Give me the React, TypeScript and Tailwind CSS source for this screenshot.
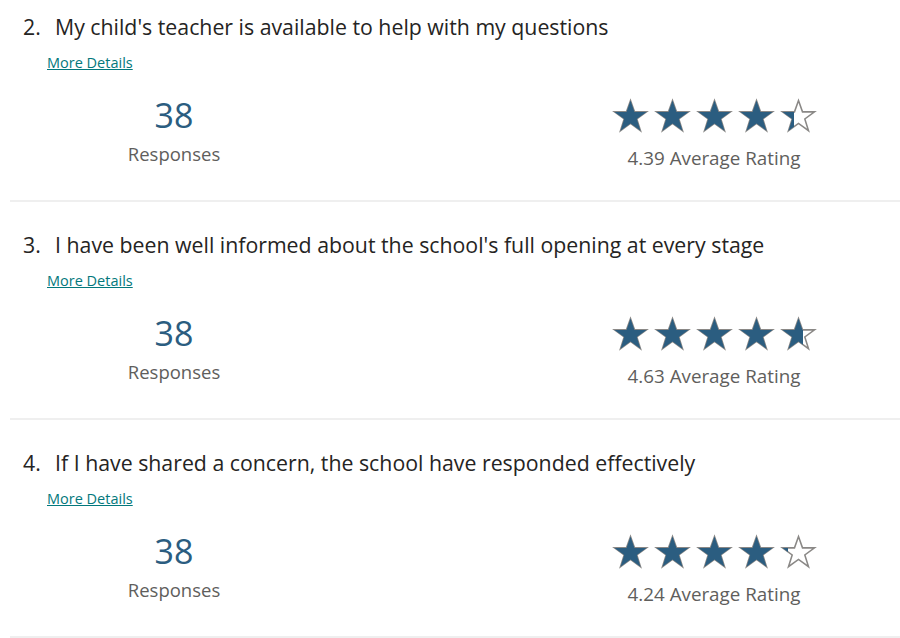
import React from "react";

type Question = {
  num: number;
  title: string;
  responses: number;
  rating: number;
};

const questions: Question[] = [
  { num: 2, title: "My child's teacher is available to help with my questions", responses: 38, rating: 4.39 },
  { num: 3, title: "I have been well informed about the school's full opening at every stage", responses: 38, rating: 4.63 },
  { num: 4, title: "If I have shared a concern, the school have responded effectively", responses: 38, rating: 4.24 },
];

const STAR = "M12 1.6l2.6 7.4h7.8l-6.3 4.6 2.4 7.6L12 16.5l-6.5 4.7 2.4-7.6L1.6 9h7.8z";

function Star({ fill }: { fill: number }) {
  return (
    <div className="relative h-[37px] w-[37px]">
      <svg viewBox="0 0 24 24" className="absolute inset-0 h-full w-full">
        <path d={STAR} fill="none" stroke="#8a8886" strokeWidth="1" strokeLinejoin="miter" />
      </svg>
      <div className="absolute inset-y-0 left-0 overflow-hidden" style={{ width: `${fill * 100}%` }}>
        <svg viewBox="0 0 24 24" className="h-[37px] w-[37px]">
          <path d={STAR} fill="#2b5d80" />
        </svg>
      </div>
    </div>
  );
}

function Stars({ rating }: { rating: number }) {
  return (
    <div className="flex gap-[5px]">
      {[0, 1, 2, 3, 4].map((i) => (
        <Star key={i} fill={Math.max(0, Math.min(1, rating - i))} />
      ))}
    </div>
  );
}

function QuestionBlock({ q }: { q: Question }) {
  return (
    <section className="h-[218px] border-b-2 border-[#efefef] ml-[10px]">
      <div className="flex pt-[31px] text-[21.3px] leading-[24px] text-[#252423]">
        <span className="w-[45px] pl-[13px]">{q.num}.</span>
        <span>{q.title}</span>
      </div>
      <a href="#" className="ml-[37px] mt-[15px] inline-block text-[14.5px] leading-[18px] text-[#03787c] underline">
        More Details
      </a>
      <div className="mt-[22px] flex">
        <div className="ml-[37px] flex w-[254px] flex-col items-center">
          <div className="text-[34px] leading-[38px] text-[#2b5d80]">{q.responses}</div>
          <div className="mt-[9px] text-[18.5px] leading-[22px] text-[#605e5c]">Responses</div>
        </div>
        <div className="ml-[303px] mt-[2px] flex w-[220px] flex-col items-center">
          <Stars rating={q.rating} />
          <div className="mt-[12px] text-[18.8px] leading-[22px] text-[#605e5c]">
            {q.rating.toFixed(2)} Average Rating
          </div>
        </div>
      </div>
    </section>
  );
}

export default function App() {
  return (
    <div className="h-[638px] w-[900px] overflow-hidden bg-white" style={{ fontFamily: '"Open Sans", "Noto Sans", sans-serif' }}>
      <div className="-mt-[16px]">
        {questions.map((q) => (
          <QuestionBlock key={q.num} q={q} />
        ))}
      </div>
    </div>
  );
}
